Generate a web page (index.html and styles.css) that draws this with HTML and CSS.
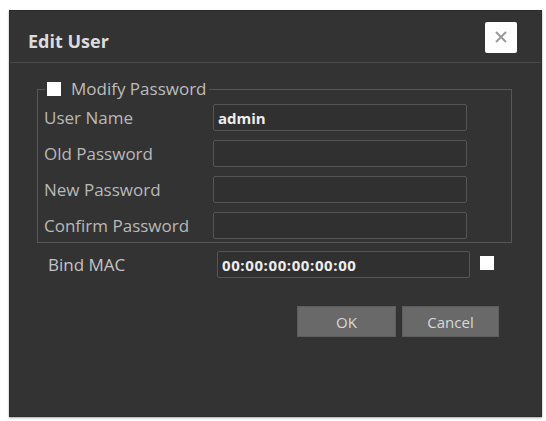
FILE: index.html
```html
<!DOCTYPE html>
<html>
<head>
<meta charset="utf-8">
<link rel="stylesheet" href="styles.css">
</head>
<body>
<div class="dialog">
  <div class="header">
    <div class="title">Edit User</div>
    <div class="close">
      <svg width="14" height="14" viewBox="0 0 14 14"><path d="M2 2 L12 12 M12 2 L2 12" stroke="#9a9a9a" stroke-width="2" fill="none"/></svg>
    </div>
  </div>
  <div class="body">
    <fieldset class="group">
      <legend class="legend"><span class="check"></span><span>Modify Password</span></legend>
      <div class="grid">
        <label class="label">User Name</label>
        <div class="input"><span class="value">admin</span></div>
        <label class="label">Old Password</label>
        <div class="input"></div>
        <label class="label">New Password</label>
        <div class="input"></div>
        <label class="label">Confirm Password</label>
        <div class="input"></div>
      </div>
    </fieldset>
    <div class="mac-row">
      <label class="label mac-label">Bind MAC</label>
      <div class="input mac-input"><span class="value mac">00:00:00:00:00:00</span></div>
      <span class="check mac-check"></span>
    </div>
    <div class="buttons">
      <div class="btn ok">OK</div>
      <div class="btn cancel">Cancel</div>
    </div>
  </div>
</div>
</body>
</html>
```
FILE: styles.css
```css
html, body {
  margin: 0;
  padding: 0;
  background: #ffffff;
}
body {
  font-family: "Open Sans", "Noto Sans", sans-serif;
  padding: 10px 4px 4px 9px;
}
.dialog {
  width: 533px;
  height: 407px;
  background: #333333;
  box-sizing: border-box;
  border: 1px solid #2b2b2b;
  box-shadow: 0 1px 2px rgba(0,0,0,0.35);
  display: flex;
  flex-direction: column;
}
.header {
  height: 51px;
  border-bottom: 1px solid #4b4b4b;
  display: flex;
  align-items: center;
  justify-content: space-between;
  padding: 0 24px 0 18px;
}
.title {
  color: #dcdcdc;
  font-weight: 700;
  font-size: 18px;
  margin-top: 8px;
}
.close {
  width: 32px;
  height: 31px;
  background: #ffffff;
  border-radius: 2px;
  display: flex;
  align-items: center;
  justify-content: center;
  margin-top: 1px;
}
.body {
  padding: 0 0 0 27px;
}
.group {
  margin: 16px 0 0 0;
  padding: 0 0 3px 6px;
  width: 475px;
  box-sizing: border-box;
  border: 1px solid #575757;
  min-inline-size: 0;
}
.legend {
  margin-left: 1px;
  padding: 0 2px;
  display: flex;
  align-items: center;
  gap: 10px;
  color: #bdbdbd;
  font-size: 17px;
  line-height: 20px;
}
.check {
  display: inline-block;
  width: 14px;
  height: 14px;
  background: #ffffff;
}
.grid {
  display: grid;
  grid-template-columns: 169px 254px;
  row-gap: 9px;
  padding-top: 5px;
  align-items: center;
}
.label {
  color: #b9b9b9;
  font-size: 17px;
  line-height: 20px;
}
.input {
  height: 27px;
  box-sizing: border-box;
  border: 1px solid #555555;
  border-radius: 2px;
  background: #303030;
  display: flex;
  align-items: center;
  padding-left: 4px;
}
.value {
  color: #ededed;
  font-weight: 700;
  font-size: 15px;
}
.mac-row {
  display: flex;
  align-items: center;
  margin-top: 8px;
  padding-left: 11px;
}
.mac-label {
  width: 169px;
  color: #c4c4c4;
}
.mac-input {
  width: 253px;
}
.mac {
  font-size: 15px;
  letter-spacing: 0.6px;
}
.mac-check {
  margin-left: 10px;
  margin-top: -4px;
}
.buttons {
  display: flex;
  justify-content: flex-end;
  gap: 6px;
  margin-top: 28px;
  padding-right: 42px;
}
.btn {
  height: 31px;
  background: #696969;
  border: 1px solid #5e5e5e;
  box-sizing: border-box;
  color: #d8d8d8;
  font-size: 15px;
  display: flex;
  align-items: center;
  justify-content: center;
}
.ok { width: 99px; }
.cancel { width: 97px; }
```
